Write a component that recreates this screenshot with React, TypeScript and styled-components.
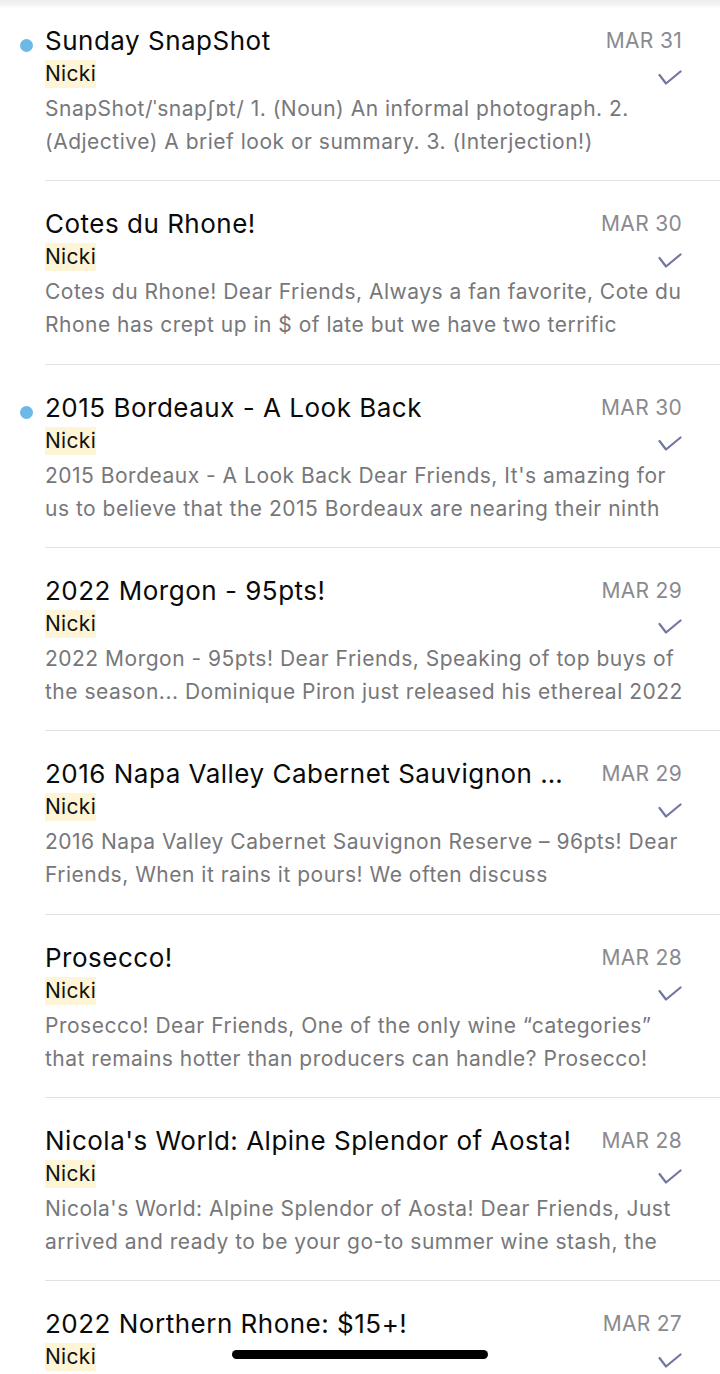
import React from "react";
import styled, { createGlobalStyle } from "styled-components";

const GlobalStyle = createGlobalStyle`
  html, body { margin: 0; padding: 0; background: #ffffff; }
  body {
    font-family: Inter, "Noto Sans", "Liberation Sans", sans-serif;
    -webkit-font-smoothing: antialiased;
  }
`;

type Mail = {
  title: string;
  date: string;
  unread?: boolean;
  preview: [string, string];
};

const mails: Mail[] = [
  {
    title: "Sunday SnapShot",
    date: "MAR 31",
    unread: true,
    preview: [
      "SnapShot/ˈsnapʃɒt/ 1. (Noun) An informal photograph. 2.",
      "(Adjective) A brief look or summary. 3. (Interjection!)",
    ],
  },
  {
    title: "Cotes du Rhone!",
    date: "MAR 30",
    preview: [
      "Cotes du Rhone! Dear Friends, Always a fan favorite, Cote du",
      "Rhone has crept up in $ of late but we have two terrific",
    ],
  },
  {
    title: "2015 Bordeaux - A Look Back",
    date: "MAR 30",
    unread: true,
    preview: [
      "2015 Bordeaux - A Look Back Dear Friends, It's amazing for",
      "us to believe that the 2015 Bordeaux are nearing their ninth",
    ],
  },
  {
    title: "2022 Morgon - 95pts!",
    date: "MAR 29",
    preview: [
      "2022 Morgon - 95pts! Dear Friends, Speaking of top buys of",
      "the season... Dominique Piron just released his ethereal 2022",
    ],
  },
  {
    title: "2016 Napa Valley Cabernet Sauvignon Reserve – 96pts!",
    date: "MAR 29",
    preview: [
      "2016 Napa Valley Cabernet Sauvignon Reserve – 96pts! Dear",
      "Friends, When it rains it pours! We often discuss",
    ],
  },
  {
    title: "Prosecco!",
    date: "MAR 28",
    preview: [
      "Prosecco! Dear Friends, One of the only wine “categories”",
      "that remains hotter than producers can handle? Prosecco!",
    ],
  },
  {
    title: "Nicola's World: Alpine Splendor of Aosta!",
    date: "MAR 28",
    preview: [
      "Nicola's World: Alpine Splendor of Aosta! Dear Friends, Just",
      "arrived and ready to be your go-to summer wine stash, the",
    ],
  },
  {
    title: "2022 Northern Rhone: $15+!",
    date: "MAR 27",
    preview: [
      "2022 Northern Rhone: $15+! Dear Friends, The Northern Rhone",
      "continues to deliver some of the best values in the cellar",
    ],
  },
];

const Screen = styled.div`
  width: 720px;
  height: 1374px;
  overflow: hidden;
  background: #ffffff;
  position: relative;
`;

const TopShade = styled.div`
  position: absolute;
  top: 0;
  left: 0;
  right: 0;
  height: 8px;
  background: linear-gradient(#ededed 0%, #f3f3f3 60%, #ffffff 100%);
  z-index: 2;
`;

const List = styled.div`
  margin-top: -2px;
  display: flex;
  flex-direction: column;
`;

const Row = styled.div`
  display: grid;
  grid-template-columns: 45px 1fr;
  height: 183.33px;
  box-sizing: border-box;
`;

const Gutter = styled.div`
  display: flex;
  justify-content: center;
  padding-top: 41px;
  padding-left: 7px;
  box-sizing: border-box;
`;

const Dot = styled.span`
  width: 13px;
  height: 13px;
  border-radius: 50%;
  background: #6cb8e6;
`;

const Content = styled.div`
  min-width: 0;
  padding: 27px 38px 0 0;
  border-bottom: 1px solid #e2e2e2;
  box-sizing: border-box;
`;

const HeadLine = styled.div`
  display: flex;
  align-items: flex-start;
  gap: 28px;
`;

const Title = styled.div`
  flex: 1;
  min-width: 0;
  font-size: 26px;
  line-height: 32px;
  letter-spacing: 0.5px;
  color: #0a0a0a;
  white-space: nowrap;
  overflow: hidden;
  text-overflow: ellipsis;
`;

const DateLabel = styled.div`
  flex: none;
  font-size: 21px;
  line-height: 32px;
  letter-spacing: 0.3px;
  color: #8a8a8e;
`;

const SenderLine = styled.div`
  display: flex;
  align-items: center;
  justify-content: space-between;
  margin-top: 3px;
  height: 28px;
`;

const Sender = styled.span`
  font-size: 21px;
  line-height: 28px;
  letter-spacing: 0.3px;
  color: #111111;
  background: #fdf5d6;
`;

const Check = styled.svg`
  width: 24px;
  height: 17px;
  margin-top: 8px;
  flex: none;
`;

const Preview = styled.div`
  margin-top: 4px;
  font-size: 21px;
  line-height: 33px;
  letter-spacing: 0.5px;
  color: #77777a;
`;

const PreviewLine = styled.div`
  white-space: nowrap;
  overflow: hidden;
`;

const HomeIndicator = styled.div`
  position: absolute;
  left: 232px;
  bottom: 15px;
  width: 256px;
  height: 9px;
  border-radius: 5px;
  background: #000000;
  z-index: 3;
`;

const CheckIcon = () => (
  <Check viewBox="0 0 24 17" fill="none">
    <polyline
      points="1.5,5 8,13.5 22.5,1.5"
      stroke="#7276a0"
      strokeWidth="2.2"
      strokeLinecap="round"
      strokeLinejoin="round"
    />
  </Check>
);

export default function App() {
  return (
    <>
      <GlobalStyle />
      <Screen>
        <TopShade />
        <List>
          {mails.map((m, i) => (
            <Row key={i}>
              <Gutter>{m.unread && <Dot />}</Gutter>
              <Content>
                <HeadLine>
                  <Title>{m.title}</Title>
                  <DateLabel>{m.date}</DateLabel>
                </HeadLine>
                <SenderLine>
                  <Sender>Nicki</Sender>
                  <CheckIcon />
                </SenderLine>
                <Preview>
                  <PreviewLine>{m.preview[0]}</PreviewLine>
                  <PreviewLine>{m.preview[1]}</PreviewLine>
                </Preview>
              </Content>
            </Row>
          ))}
        </List>
        <HomeIndicator />
      </Screen>
    </>
  );
}
